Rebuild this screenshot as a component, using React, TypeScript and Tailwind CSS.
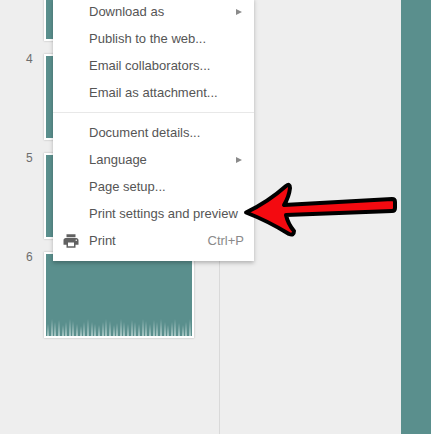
const rows1 = [
  { label: "Download as", arrow: true },
  { label: "Publish to the web..." },
  { label: "Email collaborators..." },
  { label: "Email as attachment..." },
];
const rows2 = [
  { label: "Document details..." },
  { label: "Language", arrow: true },
  { label: "Page setup..." },
  { label: "Print settings and preview" },
];

const bars = [12, 17, 14, 16, 11, 14, 17, 15, 12, 10, 14, 17, 14, 12, 11, 14, 17, 15, 11, 13, 17, 14, 12, 16, 14, 12, 17, 15, 12, 16, 14, 17, 14, 11, 14, 17, 13, 11, 14, 17];

function Row({ label, arrow, icon, hint }: { label: string; arrow?: boolean; icon?: boolean; hint?: string }) {
  return (
    <div className="relative flex h-[27px] items-center pl-[36px] pr-[10px]">
      {icon && (
        <svg className="absolute left-[9px] top-[5px]" width="18" height="18" viewBox="0 0 24 24" fill="#616161">
          <path d="M19 8H5c-1.66 0-3 1.34-3 3v6h4v4h12v-4h4v-6c0-1.66-1.34-3-3-3zm-3 11H8v-5h8v5zm3-7c-.55 0-1-.45-1-1s.45-1 1-1 1 .45 1 1-.45 1-1 1zm-1-9H6v4h12V3z" />
        </svg>
      )}
      <span className="flex-1 whitespace-nowrap">{label}</span>
      {arrow && <span className="mr-[2px] h-0 w-0 border-y-[3px] border-l-[6px] border-y-transparent border-l-[#8a8a8a]" />}
      {hint && <span className="text-[#8a8a8a]">{hint}</span>}
    </div>
  );
}

function Thumb({ n, wave }: { n?: number; wave?: boolean }) {
  return (
    <div className="flex">
      <div className="mt-[-2px] w-[44px] pl-[26px] text-[12px] leading-[14px] text-[#6d6d6d]">{n}</div>
      <div className="relative h-[86px] w-[150px] overflow-hidden border-2 border-white bg-[#5a8f8d] shadow-[0_0_2px_rgba(0,0,0,0.25)]">
        {wave && (
          <div className="absolute inset-x-0 bottom-0 flex h-[17px] items-end justify-between px-[1px]">
            {bars.map((b, i) => (
              <span key={i} className="w-[2px] bg-gradient-to-b from-[#5a8f8d] to-[#a9c8c6]" style={{ height: b }} />
            ))}
          </div>
        )}
      </div>
    </div>
  );
}

export default function App() {
  return (
    <div className="relative flex h-[434px] w-[431px] overflow-hidden bg-[#eeeeee] font-['Liberation_Sans',Arial,sans-serif]">
      <div className="h-full w-[220px] shrink-0 border-r border-[#d9d9d9]">
        <div className="mt-[-45px] flex flex-col gap-[13px]">
          <Thumb />
          <Thumb n={4} />
          <Thumb n={5} />
          <Thumb n={6} wave />
        </div>
      </div>
      <div className="flex-1" />
      <div className="h-full w-[30px] shrink-0 bg-[#5a8f8d]" />

      <div className="absolute left-[53px] top-[-2px] w-[201px] bg-white pb-[7px] text-[13px] text-[#555555] shadow-[0_2px_4px_rgba(0,0,0,0.25)]">
        {rows1.map((r) => (
          <Row key={r.label} {...r} />
        ))}
        <div className="my-[6px] h-px bg-[#e8e8e8]" />
        {rows2.map((r) => (
          <Row key={r.label} {...r} />
        ))}
        <Row label="Print" icon hint="Ctrl+P" />
      </div>

      <svg className="absolute left-[240px] top-[178px]" width="162" height="62" viewBox="0 0 162 62">
        <path
          d="M6 34.5 Q28 24 46 8 Q50 5 50 10 Q49 19 44 27 L152 21 Q155 21 155 24 L155 30 Q155 33 152 33 L46 37 Q48 46 54 53 Q54 58 49 56 Q28 43 6 34.5 Z"
          fill="#f40a10"
          stroke="#000000"
          strokeWidth="4"
          strokeLinejoin="round"
        />
      </svg>
    </div>
  );
}
